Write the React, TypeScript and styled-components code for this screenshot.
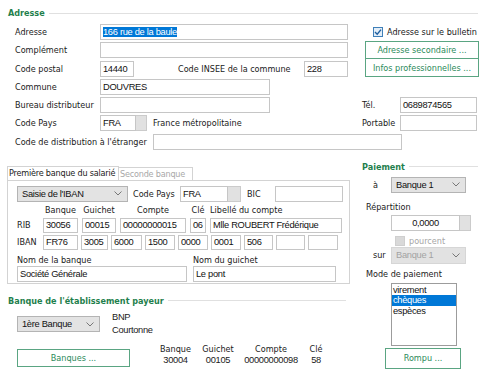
import React from "react";
import styled, { createGlobalStyle } from "styled-components";

const GREEN = "#1f7f4d";
const INPUT_FONT = `"Liberation Sans Narrow", "Liberation Sans", Arial, sans-serif`;

const GlobalStyle = createGlobalStyle`
  html, body { margin: 0; padding: 0; background: #fff; }
  body {
    font-family: "DejaVu Sans Condensed", "DejaVu Sans", sans-serif;
    font-stretch: condensed;
    font-size: 9px;
    color: #1a1a1a;
  }
  * { box-sizing: border-box; }
`;

const Page = styled.div`
  width: 488px;
  height: 378px;
  overflow: hidden;
  padding: 8px 10px 0 8px;
`;

const SectionTitle = styled.div<{ $mr?: number; $mt?: number }>`
  display: flex;
  align-items: center;
  gap: 4px;
  height: 10px;
  margin-top: ${(p) => p.$mt ?? 0}px;
  margin-right: ${(p) => p.$mr ?? 0}px;
  color: ${GREEN};
  font-weight: bold;
  white-space: nowrap;
  &::after {
    content: "";
    flex: 1;
    height: 1px;
    background: #e0e0e0;
  }
`;

const AddressGrid = styled.div`
  display: grid;
  grid-template-columns: 333px 116px;
  grid-auto-rows: 16px;
  column-gap: 14px;
  row-gap: 2.3px;
  margin: 6px 0 0 7px;
`;

const Row = styled.div<{ $col?: string; $pl?: number }>`
  display: flex;
  align-items: center;
  grid-column: ${(p) => p.$col ?? "auto"};
  padding-left: ${(p) => p.$pl ?? 0}px;
  white-space: nowrap;
`;

const Label = styled.span<{ $w?: number; $ml?: number; $muted?: boolean }>`
  flex: none;
  width: ${(p) => (p.$w ? `${p.$w}px` : "auto")};
  margin-left: ${(p) => p.$ml ?? 0}px;
  color: ${(p) => (p.$muted ? "#a6a6a6" : "#1a1a1a")};
  white-space: nowrap;
`;

const TextBox = styled.div<{ $w: number; $h?: number; $ml?: number; $center?: boolean }>`
  flex: none;
  width: ${(p) => p.$w}px;
  height: ${(p) => p.$h ?? 16}px;
  margin-left: ${(p) => p.$ml ?? 0}px;
  border: 1px solid #c6c6c6;
  background: #fff;
  padding: 0 2px;
  display: flex;
  align-items: center;
  justify-content: ${(p) => (p.$center ? "center" : "flex-start")};
  font-family: ${INPUT_FONT};
  font-size: 9.3px;
  letter-spacing: -0.3px;
  color: #111;
  white-space: nowrap;
  overflow: hidden;
`;

const Selected = styled.span`
  background: #0078d7;
  color: #fff;
`;

const GrayKnob = styled.div<{ $w: number; $h?: number }>`
  flex: none;
  width: ${(p) => p.$w}px;
  height: ${(p) => p.$h ?? 16}px;
  background: #e1e1e1;
  border: 1px solid #cbcbcb;
  border-left: none;
`;

const Combo = styled.div<{ $w: number; $h?: number; $ml?: number; $disabled?: boolean }>`
  flex: none;
  width: ${(p) => p.$w}px;
  height: ${(p) => p.$h ?? 16}px;
  margin-left: ${(p) => p.$ml ?? 0}px;
  display: flex;
  align-items: center;
  justify-content: space-between;
  padding: 0 5px 0 4px;
  background: ${(p) => (p.$disabled ? "#e2e2e2" : "#e3e3e3")};
  border: 1px solid ${(p) => (p.$disabled ? "#d6d6d6" : "#b4b4b4")};
  color: ${(p) => (p.$disabled ? "#a2a2a2" : "#111")};
  font-family: ${INPUT_FONT};
  font-size: 9.3px;
  letter-spacing: -0.3px;
  white-space: nowrap;
`;

const GreenButton = styled.div<{ $w: number; $h: number; $ml?: number }>`
  flex: none;
  width: ${(p) => p.$w}px;
  height: ${(p) => p.$h}px;
  margin-left: ${(p) => p.$ml ?? 0}px;
  display: flex;
  align-items: center;
  justify-content: center;
  border: 1px solid #5aa582;
  background: #fff;
  color: #2b8a5a;
  white-space: nowrap;
`;

const ButtonStack = styled.div`
  grid-column: 2;
  grid-row: 2 / span 2;
  align-self: center;
  display: flex;
  flex-direction: column;
  padding-left: 3px;
  & > * + * {
    margin-top: -1px;
  }
`;

const CheckBox = styled.div<{ $disabled?: boolean }>`
  flex: none;
  width: 10px;
  height: 10px;
  border: 1px solid ${(p) => (p.$disabled ? "#cfcfcf" : "#3f7fb8")};
  background: ${(p) => (p.$disabled ? "#d9d9d9" : "#e3eef8")};
  display: flex;
  align-items: center;
  justify-content: center;
`;

/* bottom area */

const Bottom = styled.div`
  display: flex;
  gap: 12px;
  margin-top: 10px;
`;

const LeftCol = styled.div`
  width: 342px;
  flex: none;
`;

const RightCol = styled.div`
  width: 116px;
  flex: none;
`;

const TabStrip = styled.div`
  display: flex;
  align-items: flex-end;
  height: 14px;
  margin: 6px 0 0 -1px;
`;

const Tab = styled.div<{ $active?: boolean; $w: number }>`
  width: ${(p) => p.$w}px;
  height: ${(p) => (p.$active ? 14 : 13)}px;
  border: 1px solid #d3d3d3;
  border-bottom: none;
  border-left: ${(p) => (p.$active ? "1px solid #d3d3d3" : "none")};
  padding-left: 1px;
  display: flex;
  align-items: center;
  letter-spacing: -0.2px;
  color: ${(p) => (p.$active ? "#1a1a1a" : "#a8a8a8")};
  white-space: nowrap;
`;

const GroupBox = styled.div`
  width: 343px;
  margin-left: -1px;
  border: 1px solid #d3d3d3;
  padding: 5px 0 1px 9px;
`;

const FlexLine = styled.div<{ $mt?: number; $h?: number; $gap?: number; $pl?: number }>`
  display: flex;
  align-items: center;
  height: ${(p) => p.$h ?? 16}px;
  margin-top: ${(p) => p.$mt ?? 0}px;
  gap: ${(p) => p.$gap ?? 0}px;
  padding-left: ${(p) => p.$pl ?? 0}px;
  white-space: nowrap;
`;

const HeadCell = styled.span<{ $w: number; $left?: boolean }>`
  flex: none;
  width: ${(p) => p.$w}px;
  text-align: ${(p) => (p.$left ? "left" : "center")};
`;

const BankInfo = styled.div`
  margin-left: 12px;
  line-height: 13px;
  font-family: ${INPUT_FONT};
  font-size: 9.3px;
  letter-spacing: -0.3px;
`;

const FooterRow = styled.div`
  display: flex;
  align-items: flex-end;
  height: 24px;
  margin-top: 6px;
  padding-left: 9px;
`;

const BankTable = styled.div`
  display: grid;
  grid-template-columns: 35px 34px 56px 18px;
  column-gap: 8px;
  margin-left: 28px;
  line-height: 11.5px;
  text-align: center;
  white-space: nowrap;
`;

const TableValue = styled.span`
  font-family: ${INPUT_FONT};
  font-size: 9.3px;
  letter-spacing: -0.3px;
`;

const ListBox = styled.div`
  width: 66px;
  height: 63px;
  margin: 4px 0 0 29px;
  border: 1px solid #9c9c9c;
  padding-top: 1px;
  font-family: ${INPUT_FONT};
  font-size: 9.3px;
  letter-spacing: -0.3px;
`;

const ListItem = styled.div<{ $selected?: boolean }>`
  height: 10.5px;
  line-height: 10.5px;
  padding-left: 1px;
  background: ${(p) => (p.$selected ? "#0078d7" : "transparent")};
  color: ${(p) => (p.$selected ? "#fff" : "#111")};
`;

const Chevron = () => (
  <svg width="8" height="5" viewBox="0 0 8 5">
    <polyline points="0.5,0.5 4,4 7.5,0.5" fill="none" stroke="#777" strokeWidth="1" />
  </svg>
);

const Check = () => (
  <svg width="8" height="8" viewBox="0 0 8 8">
    <polyline points="1,4 3.2,6.2 7,1.6" fill="none" stroke="#1f5fa0" strokeWidth="1.4" />
  </svg>
);

const ribCells = [
  { w: 35, v: "30056" },
  { w: 34, v: "00015" },
  { w: 66, v: "00000000015" },
  { w: 16, v: "06" },
  { w: 132, v: "Mlle ROUBERT Frédérique" },
];

const ribHeads = [
  { w: 35, t: "Banque" },
  { w: 34, t: "Guichet" },
  { w: 66, t: "Compte" },
  { w: 16, t: "Clé" },
  { w: 132, t: "Libellé du compte", left: true },
];

const ibanCells = [
  { w: 35, v: "FR76" },
  { w: 27, v: "3005" },
  { w: 31, v: "6000" },
  { w: 30, v: "1500" },
  { w: 30, v: "0000" },
  { w: 30, v: "0001" },
  { w: 29, v: "506" },
  { w: 29, v: "" },
  { w: 30, v: "" },
];

const payerBank = [
  ["Banque", "30004"],
  ["Guichet", "00105"],
  ["Compte", "00000000098"],
  ["Clé", "58"],
];

export default function App() {
  return (
    <Page>
      <GlobalStyle />
      <SectionTitle>Adresse</SectionTitle>

      <AddressGrid>
        <Row $col="1">
          <Label $w={85}>Adresse</Label>
          <TextBox $w={248}>
            <Selected>166 rue de la baule</Selected>
          </TextBox>
        </Row>
        <Row $col="2" $pl={11}>
          <CheckBox>
            <Check />
          </CheckBox>
          <Label $ml={4}>Adresse sur le bulletin</Label>
        </Row>

        <Row $col="1">
          <Label $w={85}>Complément</Label>
          <TextBox $w={248} />
        </Row>
        <ButtonStack>
          <GreenButton $w={114} $h={18}>Adresse secondaire ...</GreenButton>
          <GreenButton $w={114} $h={19}>Infos professionnelles ...</GreenButton>
        </ButtonStack>

        <Row $col="1">
          <Label $w={85}>Code postal</Label>
          <TextBox $w={34}>14440</TextBox>
          <Label $ml={44}>Code INSEE de la commune</Label>
          <TextBox $w={44} style={{ marginLeft: "auto" }}>228</TextBox>
        </Row>

        <Row $col="1">
          <Label $w={85}>Commune</Label>
          <TextBox $w={170}>DOUVRES</TextBox>
        </Row>
        <Row $col="2" />

        <Row $col="1">
          <Label $w={85}>Bureau distributeur</Label>
          <TextBox $w={170} />
        </Row>
        <Row $col="2">
          <Label $w={38}>Tél.</Label>
          <TextBox $w={77} $h={16}>0689874565</TextBox>
        </Row>

        <Row $col="1">
          <Label $w={85}>Code Pays</Label>
          <TextBox $w={36}>FRA</TextBox>
          <GrayKnob $w={11} />
          <Label $ml={6}>France métropolitaine</Label>
        </Row>
        <Row $col="2">
          <Label $w={38}>Portable</Label>
          <TextBox $w={77} />
        </Row>

        <Row $col="1 / -1">
          <Label $w={138}>Code de distribution à l'étranger</Label>
          <TextBox $w={249} />
        </Row>
      </AddressGrid>

      <Bottom>
        <LeftCol>
          <TabStrip>
            <Tab $active $w={112}>Première banque du salarié</Tab>
            <Tab $w={74}>Seconde banque</Tab>
          </TabStrip>
          <GroupBox>
            <FlexLine>
              <Combo $w={111}>
                Saisie de l'IBAN
                <Chevron />
              </Combo>
              <Label $w={47} $ml={5}>Code Pays</Label>
              <TextBox $w={48}>FRA</TextBox>
              <GrayKnob $w={13} />
              <Label $w={28} $ml={6}>BIC</Label>
              <TextBox $w={68} />
            </FlexLine>

            <FlexLine $mt={3} $h={10} $gap={4} $pl={26}>
              {ribHeads.map((h) => (
                <HeadCell key={h.t} $w={h.w} $left={h.left}>
                  {h.t}
                </HeadCell>
              ))}
            </FlexLine>

            <FlexLine $mt={3} $h={15} $gap={4}>
              <Label $w={22}>RIB</Label>
              {ribCells.map((c, i) => (
                <TextBox key={i} $w={c.w} $h={15}>
                  {c.v}
                </TextBox>
              ))}
            </FlexLine>

            <FlexLine $mt={2} $h={15} $gap={3}>
              <Label $w={23}>IBAN</Label>
              {ibanCells.map((c, i) => (
                <TextBox key={i} $w={c.w} $h={15}>
                  {c.v}
                </TextBox>
              ))}
            </FlexLine>

            <FlexLine $mt={4} $h={12} $gap={6}>
              <Label $w={170}>Nom de la banque</Label>
              <Label $w={143}>Nom du guichet</Label>
            </FlexLine>
            <FlexLine $gap={6}>
              <TextBox $w={170}>Société Générale</TextBox>
              <TextBox $w={143}>Le pont</TextBox>
            </FlexLine>
          </GroupBox>

          <SectionTitle $mt={12} $mr={4}>
            Banque de l'établissement payeur
          </SectionTitle>

          <FlexLine $mt={6} $h={25} $pl={9}>
            <Combo $w={83}>
              1ère Banque
              <Chevron />
            </Combo>
            <BankInfo>
              BNP
              <br />
              Courtonne
            </BankInfo>
          </FlexLine>

          <FooterRow>
            <GreenButton $w={113} $h={18}>Banques ...</GreenButton>
            <BankTable>
              {payerBank.map(([h]) => (
                <span key={h}>{h}</span>
              ))}
              {payerBank.map(([h, v]) => (
                <TableValue key={h}>{v}</TableValue>
              ))}
            </BankTable>
          </FooterRow>
        </LeftCol>

        <RightCol>
          <SectionTitle $mt={2}>Paiement</SectionTitle>

          <FlexLine $mt={5} $pl={11}>
            <Label $w={18}>à</Label>
            <Combo $w={75}>
              Banque 1
              <Chevron />
            </Combo>
          </FlexLine>

          <FlexLine $mt={9} $h={10} $pl={4}>
            <Label>Répartition</Label>
          </FlexLine>

          <FlexLine $mt={3} $pl={29}>
            <TextBox $w={69} $center>0,0000</TextBox>
            <GrayKnob $w={11} />
          </FlexLine>

          <FlexLine $mt={5} $h={10} $pl={33}>
            <CheckBox $disabled />
            <Label $ml={4} $muted>
              pourcent
            </Label>
          </FlexLine>

          <FlexLine $mt={1} $h={17} $pl={11}>
            <Label $w={18}>sur</Label>
            <Combo $w={75} $h={17} $disabled>
              Banque 1
              <Chevron />
            </Combo>
          </FlexLine>

          <FlexLine $mt={5} $h={10} $pl={4}>
            <Label>Mode de paiement</Label>
          </FlexLine>

          <ListBox>
            <ListItem>virement</ListItem>
            <ListItem $selected>chèques</ListItem>
            <ListItem>espèces</ListItem>
          </ListBox>

          <FlexLine $mt={2} $h={21} $pl={23}>
            <GreenButton $w={76} $h={21}>Rompu ...</GreenButton>
          </FlexLine>
        </RightCol>
      </Bottom>
    </Page>
  );
}
